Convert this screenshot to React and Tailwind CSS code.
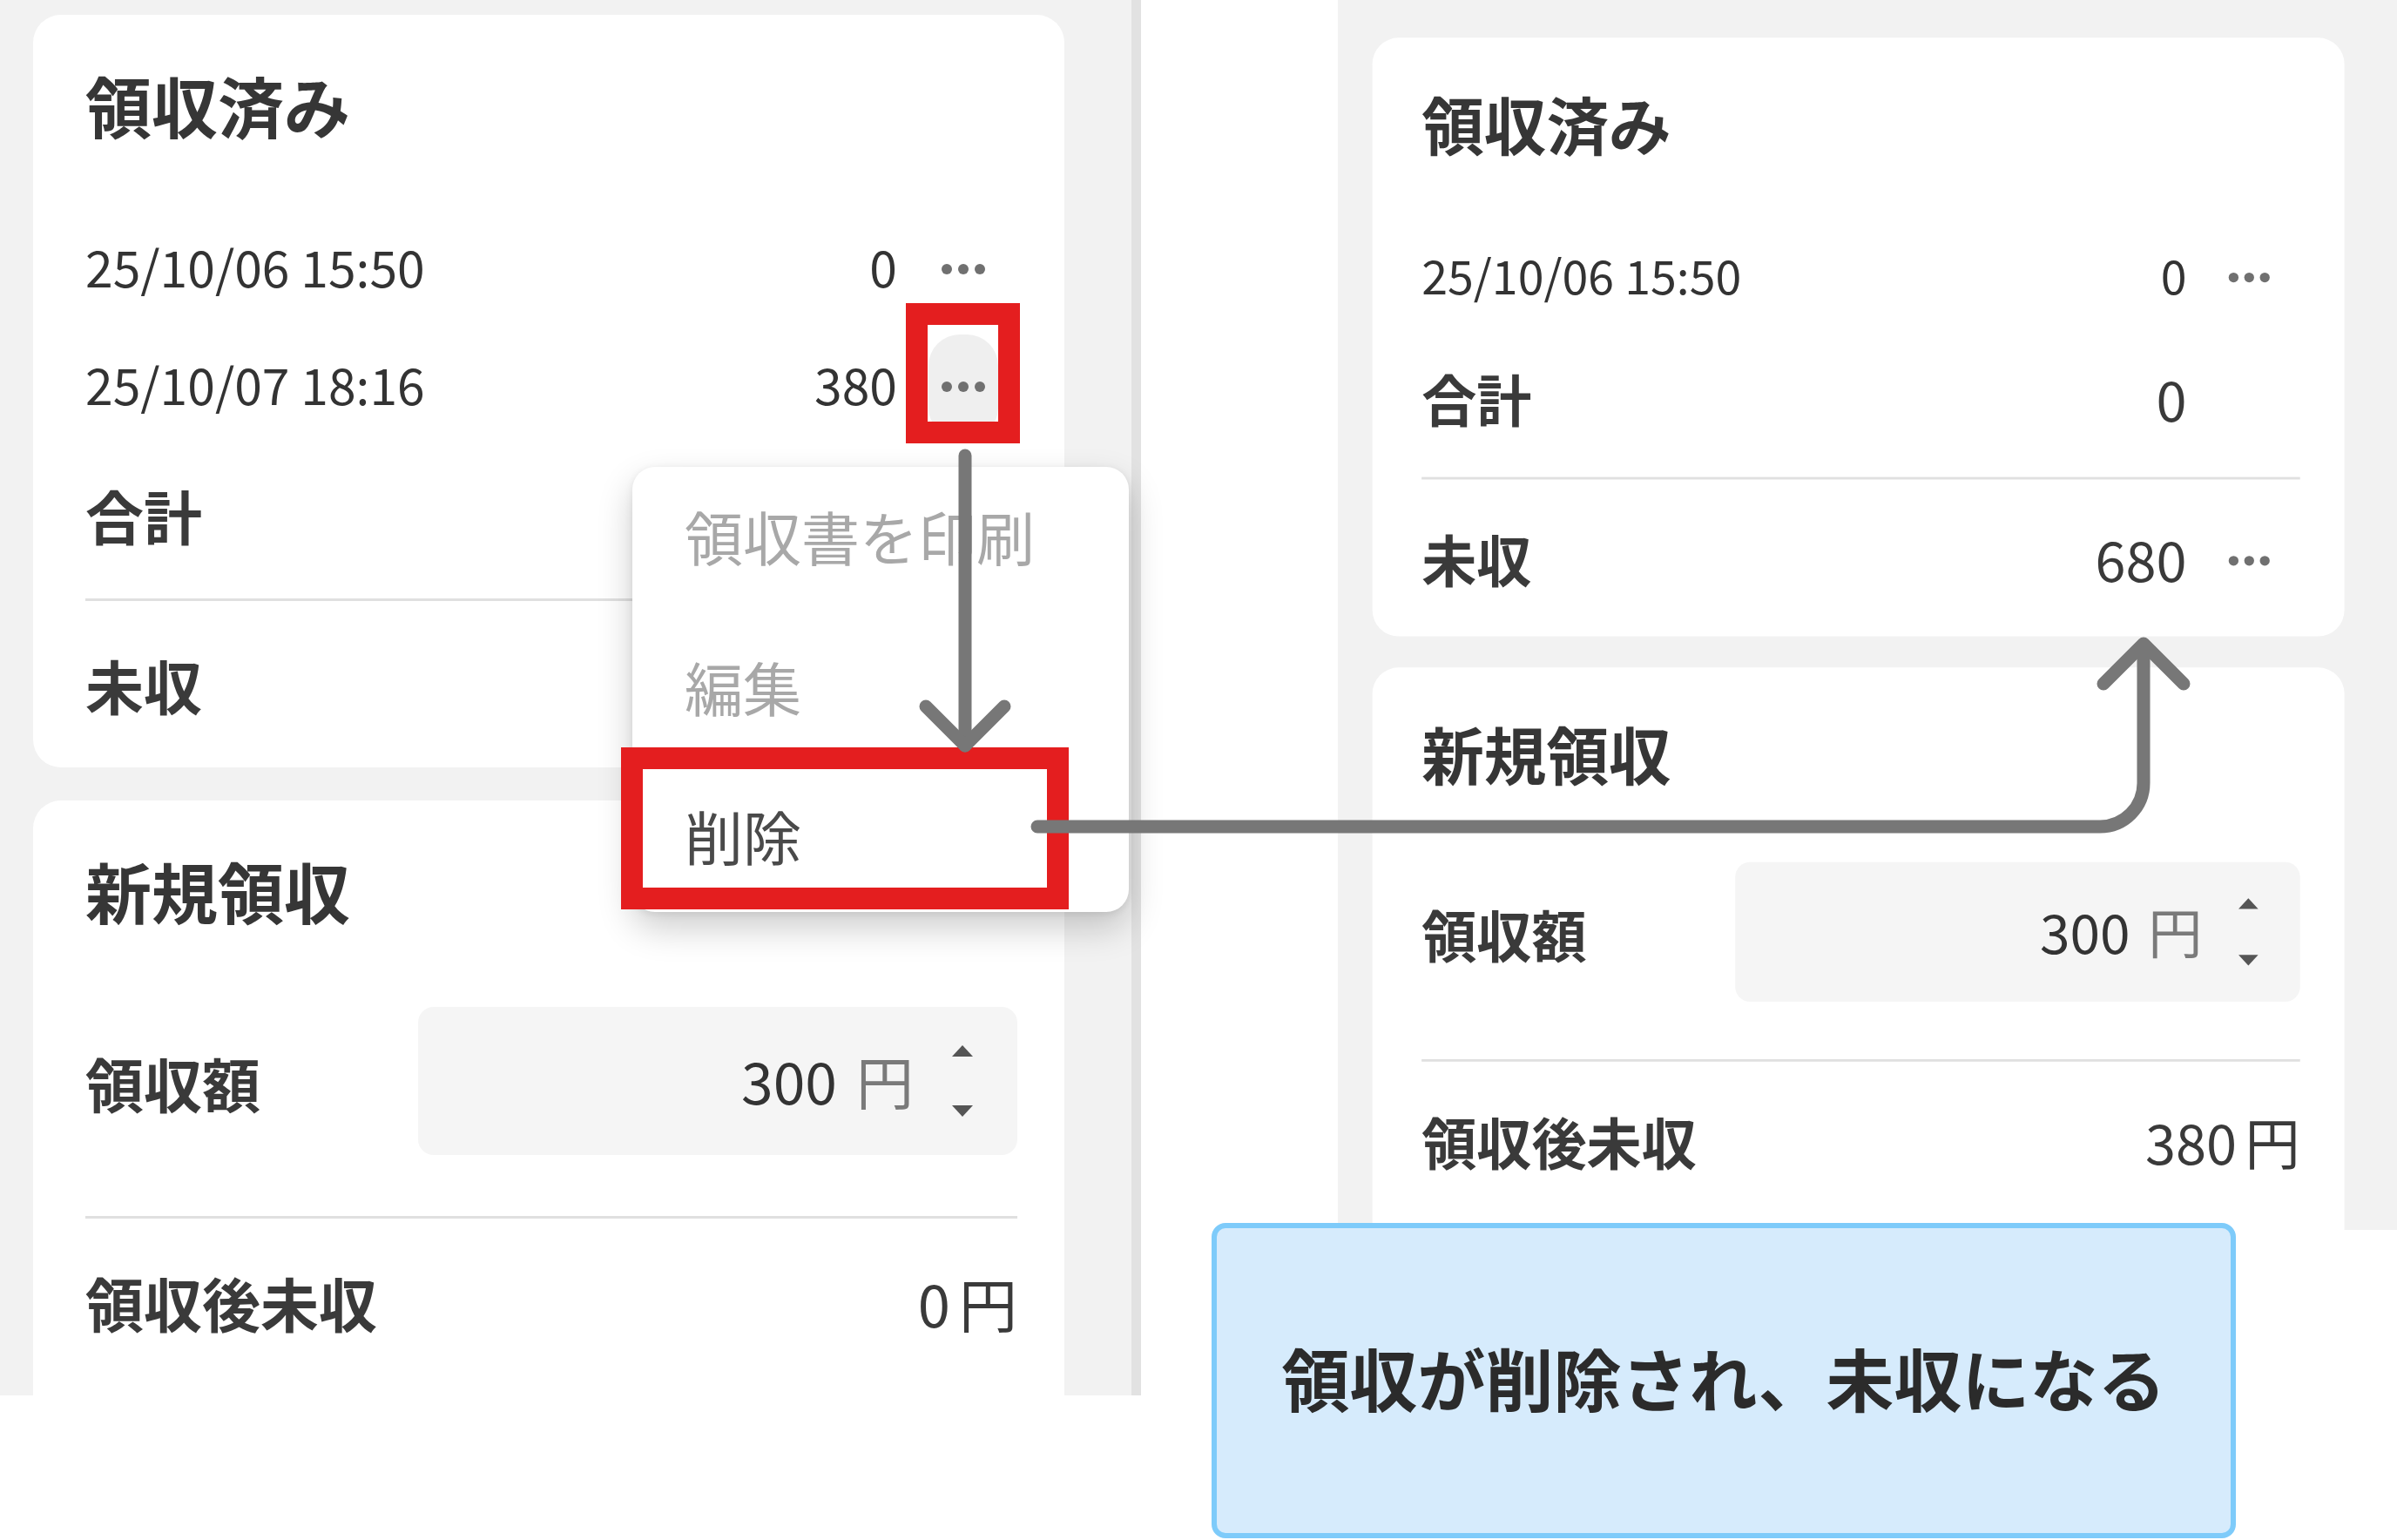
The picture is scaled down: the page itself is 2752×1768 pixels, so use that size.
import React from "react";

function Dots() {
  return (
    <div className="flex items-center gap-[7px]">
      <span className="block w-[12px] h-[12px] rounded-full bg-[#707070]" />
      <span className="block w-[12px] h-[12px] rounded-full bg-[#707070]" />
      <span className="block w-[12px] h-[12px] rounded-full bg-[#707070]" />
    </div>
  );
}

function MoreButton({ active, hidden }) {
  if (hidden) return <div className="w-[80px] h-[120px]" />;
  return (
    <div
      className={
        active
          ? "w-[80px] h-[120px] rounded-[36px] bg-[#efefef] flex items-center justify-center"
          : "w-[80px] h-[120px] flex items-center justify-center"
      }
    >
      <Dots />
    </div>
  );
}

function DateRow({ date, amount, active }) {
  return (
    <div className="h-[135px] flex items-center justify-between">
      <span className="pb-[6px] text-[57px] leading-none text-[#333333]">{date}</span>
      <div className="flex items-center">
        <span className="pb-[6px] text-[57px] leading-none text-[#333333]">{amount}</span>
        <div className="ml-[36px]">
          <MoreButton active={active} />
        </div>
        <div className="w-[22px]" />
      </div>
    </div>
  );
}

function SumRow({ label, value, dots, className }) {
  return (
    <div className={"flex items-center justify-between " + className}>
      <span className="pb-[7px] text-[67px] leading-none font-bold text-[#3a3a3a]">{label}</span>
      <div className="flex items-center">
        <span className="pb-[7px] text-[67px] leading-none text-[#3a3a3a]">{value}</span>
        <div className="ml-[36px]">
          <MoreButton hidden={!dots} />
        </div>
        <div className="w-[22px]" />
      </div>
    </div>
  );
}

function Spinner() {
  return (
    <div className="ml-[40px] flex flex-col items-center justify-between h-[84px] w-[32px]">
      <svg width="30" height="15" viewBox="0 0 30 15">
        <path d="M15 1 L27 14 L3 14 Z" fill="#555555" />
      </svg>
      <svg width="30" height="15" viewBox="0 0 30 15">
        <path d="M3 1 L27 1 L15 14 Z" fill="#555555" />
      </svg>
    </div>
  );
}

function Screen({ after }) {
  const rows = after
    ? [{ date: "25/10/06 15:50", amount: "0" }]
    : [
        { date: "25/10/06 15:50", amount: "0" },
        { date: "25/10/07 18:16", amount: "380", active: true },
      ];
  return (
    <div className="flex flex-col gap-[38px] w-[1184px]">
      <div className="bg-white rounded-[32px] pl-[60px] pr-[54px] pt-[60px] w-[1184px]">
        <div className="h-[94px] pb-[9px] flex items-center text-[76px] font-bold leading-none text-[#363636]">
          領収済み
        </div>
        <div className="mt-[70px] flex flex-col">
          {rows.map((r) => (
            <DateRow key={r.date} date={r.date} amount={r.amount} active={r.active} />
          ))}
        </div>
        <SumRow label="合計" value={after ? "0" : "380"} className="mt-[15px] h-[135px]" />
        <div className="mt-[26px] h-[3px] bg-[#e0e0e0]" />
        <SumRow label="未収" value={after ? "680" : "300"} dots className="h-[191px] pt-[6px]" />
      </div>
      <div className="bg-white rounded-[32px] pl-[60px] pr-[54px] pt-[60px] pb-[120px] w-[1184px]">
        <div className="h-[94px] pb-[8px] flex items-center text-[76px] font-bold leading-none text-[#363636]">
          新規領収
        </div>
        <div className="mt-[83px] flex items-center">
          <span className="w-[382px] pt-[2px] text-[67px] leading-none font-bold text-[#3a3a3a]">領収額</span>
          <div className="flex-1 h-[170px] rounded-[18px] bg-[#f5f5f5] flex items-center justify-end pr-[47px]">
            <span className="pb-[4px] text-[66px] leading-none text-[#333333]">300</span>
            <span className="pb-[4px] ml-[22px] text-[66px] leading-none text-[#7a7a7a]">円</span>
            <Spinner />
          </div>
        </div>
        <div className="mt-[70px] h-[3px] bg-[#e0e0e0]" />
        <div className="h-[198px] pb-[7px] flex items-center justify-between">
          <span className="text-[67px] leading-none font-bold text-[#3a3a3a]">領収後未収</span>
          <div className="flex items-center text-[67px] leading-none text-[#3a3a3a]">
            <span>{after ? "380" : "0"}</span>
            <span className="ml-[10px]">円</span>
          </div>
        </div>
      </div>
    </div>
  );
}

export default function App() {
  return (
    <div className="relative w-[2752px] h-[1768px] bg-white overflow-hidden flex items-start font-['Noto_Sans_CJK_JP','Noto_Sans',sans-serif]">
      {/* Left screenshot */}
      <div className="w-[1310px] h-[1602px] flex shrink-0">
        <div className="w-[1299px] h-full bg-[#f2f2f2] overflow-hidden pl-[38px] pt-[17px]">
          <Screen />
        </div>
        <div className="w-[11px] h-full bg-[#e2e2e2]" />
      </div>

      <div className="w-[226px] shrink-0" />

      {/* Right screenshot */}
      <div className="w-[1216px] h-[1412px] bg-[#f2f2f2] overflow-hidden shrink-0">
        <div className="w-[1290px] scale-[0.9426] origin-top-left pl-[42px] pt-[46px]">
          <Screen after />
        </div>
      </div>

      {/* Context menu */}
      <div className="absolute left-[726px] top-[536px] w-[570px] h-[511px] bg-white rounded-[26px] shadow-[0_18px_40px_rgba(0,0,0,0.2),0_2px_8px_rgba(0,0,0,0.08)] flex flex-col">
        <div className="h-[170px] pb-[14px] flex items-center pl-[60px] text-[67px] leading-none text-[#a8a8a8]">
          領収書を印刷
        </div>
        <div className="h-[171px] pb-[8px] flex items-center pl-[60px] text-[67px] leading-none text-[#a8a8a8]">
          編集
        </div>
        <div className="h-[170px] pb-[8px] flex items-center pl-[60px] text-[67px] leading-none text-[#4a4a4a]">
          削除
        </div>
      </div>

      {/* Red highlight boxes */}
      <div className="absolute left-[1040px] top-[348px] w-[131px] h-[161px] border-[25px] border-[#e41e1f]" />
      <div className="absolute left-[713px] top-[858px] w-[514px] h-[186px] border-[25px] border-[#e41e1f]" />

      {/* Arrows */}
      <svg
        className="absolute left-0 top-0 pointer-events-none"
        width="2752"
        height="1768"
        viewBox="0 0 2752 1768"
        fill="none"
      >
        <g stroke="#777777" strokeWidth="15" strokeLinecap="round" strokeLinejoin="round">
          <path d="M1108 523 V856" />
          <path d="M1063 811 L1108 856 L1153 811" />
          <path d="M1191 949 H2411 A50 50 0 0 0 2461 899 V740" />
          <path d="M2415 785 L2461 739 L2507 785" />
        </g>
      </svg>

      {/* Callout */}
      <div className="absolute left-[1391px] top-[1404px] w-[1176px] h-[362px] rounded-[16px] border-[6px] border-[#7ecbfa] bg-[#d6ebfc] flex items-center justify-center">
        <span className="pb-[8px] text-[78px] leading-none font-bold text-[#2b2b2b]">
          領収が削除され、未収になる
        </span>
      </div>
    </div>
  );
}
